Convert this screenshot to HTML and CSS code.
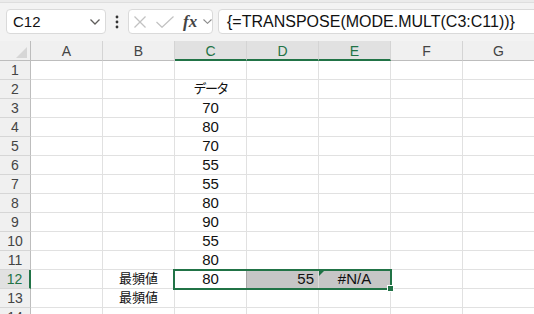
FILE: index.html
```html
<!DOCTYPE html>
<html lang="ja">
<head>
    <meta charset="UTF-8">
    <title>Sheet</title>
    <link rel="stylesheet" href="styles.css">
</head>
<body>
    <div class="top-strip"></div>

    <div class="formula-bar">
        <div class="name-box">
            <span>C12</span>
            <svg class="chevron" width="10" height="6" viewBox="0 0 10 6">
                <polyline points="0.5,0.5 5,5 9.5,0.5" fill="none" stroke="#605e5c" stroke-width="1.3"/>
            </svg>
        </div>
        <div class="more">
            <svg width="4" height="14" viewBox="0 0 4 14">
                <circle cx="2" cy="2" r="1.4" fill="#333"/>
                <circle cx="2" cy="7" r="1.4" fill="#333"/>
                <circle cx="2" cy="12" r="1.4" fill="#333"/>
            </svg>
        </div>
        <div class="fx-box">
            <svg class="icon-x" width="14" height="12" viewBox="0 0 14 12">
                <line x1="1.5" y1="0.5" x2="12.5" y2="11.5" stroke="#c2c2c2" stroke-width="1.2"/>
                <line x1="12.5" y1="0.5" x2="1.5" y2="11.5" stroke="#c2c2c2" stroke-width="1.2"/>
            </svg>
            <svg class="icon-check" width="18" height="12" viewBox="0 0 18 12">
                <polyline points="0.5,6 6,11.3 17.5,0.5" fill="none" stroke="#c2c2c2" stroke-width="1.2"/>
            </svg>
            <span class="fx">fx</span>
            <svg class="chevron-sm" width="9" height="5" viewBox="0 0 9 5">
                <polyline points="0.5,0.5 4.5,4.3 8.5,0.5" fill="none" stroke="#8a8a8a" stroke-width="1.1"/>
            </svg>
        </div>
        <div class="formula-input">{=TRANSPOSE(MODE.MULT(C3:C11))}</div>
    </div>

    <div class="sheet" id="sheet"></div>

    <script>
        // cell contents, keyed by address
        const cols = ['A', 'B', 'C', 'D', 'E', 'F', 'G'];
        const selCols = ['C', 'D', 'E'];
        const selRow = 12;
        const rowCount = 14;

        const cells = {
            'C2': ['データ', 'center jp kana'],
            'C3': ['70', 'center'],
            'C4': ['80', 'center'],
            'C5': ['70', 'center'],
            'C6': ['55', 'center'],
            'C7': ['55', 'center'],
            'C8': ['80', 'center'],
            'C9': ['90', 'center'],
            'C10': ['55', 'center'],
            'C11': ['80', 'center'],
            'B12': ['最頻値', 'center jp'],
            'C12': ['80', 'center active'],
            'D12': ['55', 'right shade'],
            'E12': ['#N/A', 'center shade err'],
            'B13': ['最頻値', 'center jp']
        };

        const sheet = document.getElementById('sheet');

        function add(cls, text) {
            const div = document.createElement('div');
            div.className = cls;
            if (text) div.textContent = text;
            sheet.appendChild(div);
            return div;
        }

        add('cell head corner');
        cols.forEach(function (c) {
            add('cell head' + (selCols.includes(c) ? ' sel' : ''), c);
        });

        for (let r = 1; r <= rowCount; r++) {
            add('cell row-head' + (r === selRow ? ' sel' : ''), String(r));
            cols.forEach(function (c) {
                const item = cells[c + r];
                const div = add('cell' + (item ? ' ' + item[1] : ''), item ? item[0] : '');
                // selection outline C12:E12 hangs off the active cell
                if (c + r === 'C12') {
                    div.insertAdjacentHTML('beforeend', '<span class="selection"><span class="handle"></span></span>');
                }
            });
        }
    </script>
</body>
</html>
```

FILE: styles.css
```css
* {
    box-sizing: border-box;
}

body {
    margin: 0;
    width: 534px;
    height: 314px;
    overflow: hidden;
    background: #f3f3f3;
    font-family: "Liberation Sans", "Noto Sans CJK JP", sans-serif;
    color: #111;
}

.top-strip {
    height: 3px;
    background: #ebebeb;
    border-bottom: 1px solid #dedede;
}

/* formula bar */
.formula-bar {
    display: flex;
    align-items: flex-start;
    height: 38px;
    padding: 6px 0 0 6px;
    white-space: nowrap;
}

.name-box {
    flex: 0 0 100px;
    height: 25px;
    display: flex;
    align-items: center;
    justify-content: space-between;
    padding: 0 5px 0 6px;
    background: #fff;
    border: 1px solid #dadada;
    border-radius: 4px;
    font-size: 15px;
}

.more {
    flex: 0 0 22px;
    height: 25px;
    display: flex;
    align-items: center;
    justify-content: center;
}

.fx-box {
    flex: 0 0 85px;
    height: 25px;
    display: flex;
    align-items: center;
    padding-left: 4px;
    background: #fff;
    border: 1px solid #dadada;
    border-radius: 4px;
}

.icon-check {
    margin-left: 9px;
}

.fx {
    margin-left: 9px;
    width: 14px;
    font-family: "Liberation Serif", serif;
    font-style: italic;
    font-weight: bold;
    font-size: 17px;
    line-height: 20px;
    color: #444;
}

.chevron-sm {
    margin-left: 6px;
}

.formula-input {
    flex: 0 0 340px;
    height: 25px;
    margin-left: 5px;
    padding-left: 8px;
    background: #fff;
    border: 1px solid #dadada;
    border-radius: 4px;
    font-size: 16px;
    line-height: 23px;
}

/* sheet grid */
.sheet {
    display: grid;
    grid-template-columns: 31px repeat(7, 72px);
    grid-template-rows: 20px repeat(14, 19px);
    background: #fff;
}

.cell {
    position: relative;
    border-right: 1px solid #e1e1e1;
    border-bottom: 1px solid #e1e1e1;
    padding: 0 4px;
    font-size: 15px;
    line-height: 18px;
    white-space: nowrap;
    overflow: hidden;
}

.head {
    background: #f0f0f0;
    border-right-color: #d4d4d4;
    border-bottom-color: #bdbdbd;
    text-align: center;
    font-size: 14px;
    line-height: 20px;
    color: #444;
}

.head.sel {
    background: #e1e1e1;
    color: #217346;
    border-bottom: 2px solid #217346;
}

.corner {
    border-right-color: #bdbdbd;
}

.corner::after {
    content: '';
    position: absolute;
    right: 3px;
    bottom: 2px;
    border-left: 11px solid transparent;
    border-bottom: 11px solid #d6d6d6;
}

.row-head {
    background: #f0f0f0;
    border-right-color: #bdbdbd;
    border-bottom-color: #d6d6d6;
    padding: 0;
    text-align: center;
    font-size: 14px;
    color: #444;
}

.row-head.sel {
    background: #e1e1e1;
    color: #217346;
    border-right: 2px solid #217346;
}

.center {
    text-align: center;
}

.right {
    text-align: right;
}

.jp {
    font-size: 13px;
    font-feature-settings: "palt";
}

.kana {
    letter-spacing: -1px;
}

.active {
    overflow: visible;
    z-index: 2;
    border-right-color: #a6a6a6;
}

.shade {
    background: #c6c6c6;
    border-right-color: #dcdcdc;
}

.err::before {
    content: '';
    position: absolute;
    left: 0;
    top: 1px;
    border-top: 5px solid #1e7145;
    border-right: 5px solid transparent;
}

.selection {
    position: absolute;
    left: -2px;
    top: -1px;
    width: 219px;
    height: 21px;
    border: 2px solid #217346;
}

.handle {
    position: absolute;
    right: -4px;
    bottom: -4px;
    width: 7px;
    height: 7px;
    background: #217346;
    border: 1px solid #fff;
}
```
